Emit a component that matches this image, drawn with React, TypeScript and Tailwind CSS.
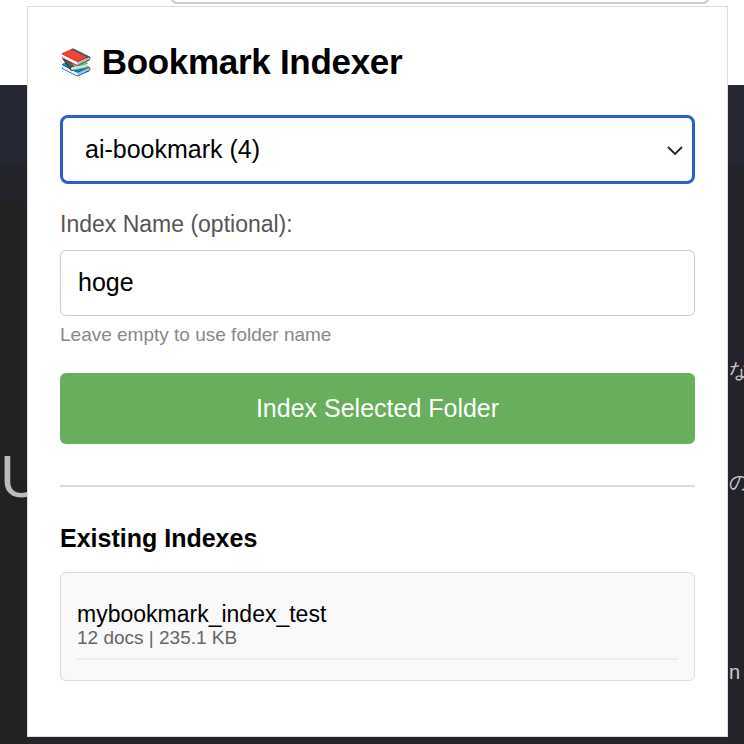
export default function App() {
  const f = { fontFamily: '"Liberation Sans", Arial, sans-serif' };
  return (
    <div className="relative w-[744px] h-[744px] overflow-hidden bg-[#23232a]" style={f}>
      <div className="absolute left-0 top-0 w-[744px] h-[85px] bg-white" />
      <div className="absolute left-0 top-[85px] w-[744px] h-[80px] bg-[#252733]" />
      <div className="absolute left-0 top-[200px] w-[27px] h-[544px] bg-[#222]" />
      <div className="absolute left-[170px] top-[-10px] w-[540px] h-[14px] rounded-full border-2 border-[#ccc] bg-white" />
      <div className="absolute left-[0px] top-[432px] text-[60px] text-[#bbb]">U</div>
      <div className="absolute left-[729px] top-[355px] text-[20px] text-[#ccc]">な</div>
      <div className="absolute left-[729px] top-[467px] text-[20px] text-[#ccc]">の</div>
      <div className="absolute left-[729px] top-[657px] text-[20px] text-[#ccc]">n</div>
      <div className="absolute left-[27px] top-[6px] w-[701px] h-[731px] bg-white border border-[#ddd] px-[32px] pt-[37px] flex flex-col">
        <h1 className="flex items-center gap-[10px] text-[35px] font-bold text-black leading-none tracking-[-0.3px]">
          <span className="text-[26px]">📚</span>Bookmark Indexer
        </h1>
        <div className="mt-[36px] h-[69px] rounded-[8px] border-[3px] border-[#2b5fc9] flex items-center justify-between pl-[22px] pr-[8px] text-[25px] text-black">
          <span>ai-bookmark (4)</span>
          <svg width="18" height="12" viewBox="0 0 18 12"><path d="M2 3l7 7 7-7" stroke="#222" strokeWidth="1.8" fill="none" /></svg>
        </div>
        <div className="mt-[23px] text-[23px] text-[#555]">Index Name (optional):</div>
        <div className="mt-[8px] h-[66px] rounded-[6px] border border-[#ccc] flex items-center pl-[17px] text-[25px] text-black">hoge</div>
        <div className="mt-[5px] text-[19px] text-[#888]">Leave empty to use folder name</div>
        <div className="mt-[24px] h-[71px] rounded-[6px] bg-[#68ae5c] flex items-center justify-center text-[25px] text-white">Index Selected Folder</div>
        <div className="mt-[41px] h-[2px] bg-[#ddd]" />
        <h2 className="mt-[33px] text-[25px] font-bold text-black">Existing Indexes</h2>
        <div className="mt-[14px] h-[109px] rounded-[6px] border border-[#ddd] bg-[#f9f9f9] px-[16px] pt-[28px] flex flex-col">
          <div className="text-[23px] text-black leading-[26px]">mybookmark_index_test</div>
          <div className="text-[19px] text-[#666] leading-[22px] pb-[9px] border-b-2 border-[#eee]">12 docs | 235.1 KB</div>
        </div>
      </div>
    </div>
  );
}
